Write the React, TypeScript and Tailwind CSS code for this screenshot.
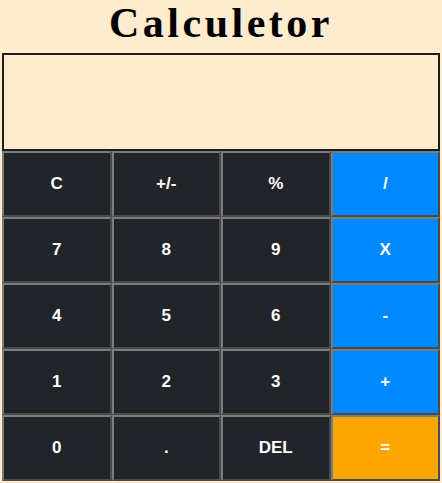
const keys: { label: string; tone: "dark" | "blue" | "orange" }[] = [
  { label: "C", tone: "dark" },
  { label: "+/-", tone: "dark" },
  { label: "%", tone: "dark" },
  { label: "/", tone: "blue" },
  { label: "7", tone: "dark" },
  { label: "8", tone: "dark" },
  { label: "9", tone: "dark" },
  { label: "X", tone: "blue" },
  { label: "4", tone: "dark" },
  { label: "5", tone: "dark" },
  { label: "6", tone: "dark" },
  { label: "-", tone: "blue" },
  { label: "1", tone: "dark" },
  { label: "2", tone: "dark" },
  { label: "3", tone: "dark" },
  { label: "+", tone: "blue" },
  { label: "0", tone: "dark" },
  { label: ".", tone: "dark" },
  { label: "DEL", tone: "dark" },
  { label: "=", tone: "orange" },
];

const toneClass = {
  dark: "bg-[#212529]",
  blue: "bg-[#0088ff]",
  orange: "bg-[#ffa500]",
};

export default function App() {
  return (
    <div className="min-h-screen bg-[#ffc0cb]">
      <div className="bg-[#ffebcd] pb-[2px]">
        <h1 className="h-[53px] text-center font-['Liberation_Serif',serif] text-[42px] font-bold leading-[46px] tracking-[3.5px] text-black">
          Calculetor
        </h1>
        <div className="ml-[2px] w-[438px]">
          {/* display */}
          <div className="h-[98px] border-2 border-[#1c1c1c] bg-[#ffebcd]"></div>
          <div className="grid grid-cols-4">
            {keys.map((k) => (
              <button
                key={k.label}
                className={`${toneClass[k.tone]} h-[66px] border-2 border-t-[#7c7c7c] border-l-[#7c7c7c] border-b-[#4a4a4a] border-r-[#4a4a4a] font-['Liberation_Sans',Arial,sans-serif] text-[17px] font-bold text-white`}
              >
                {k.label}
              </button>
            ))}
          </div>
        </div>
      </div>
    </div>
  );
}
